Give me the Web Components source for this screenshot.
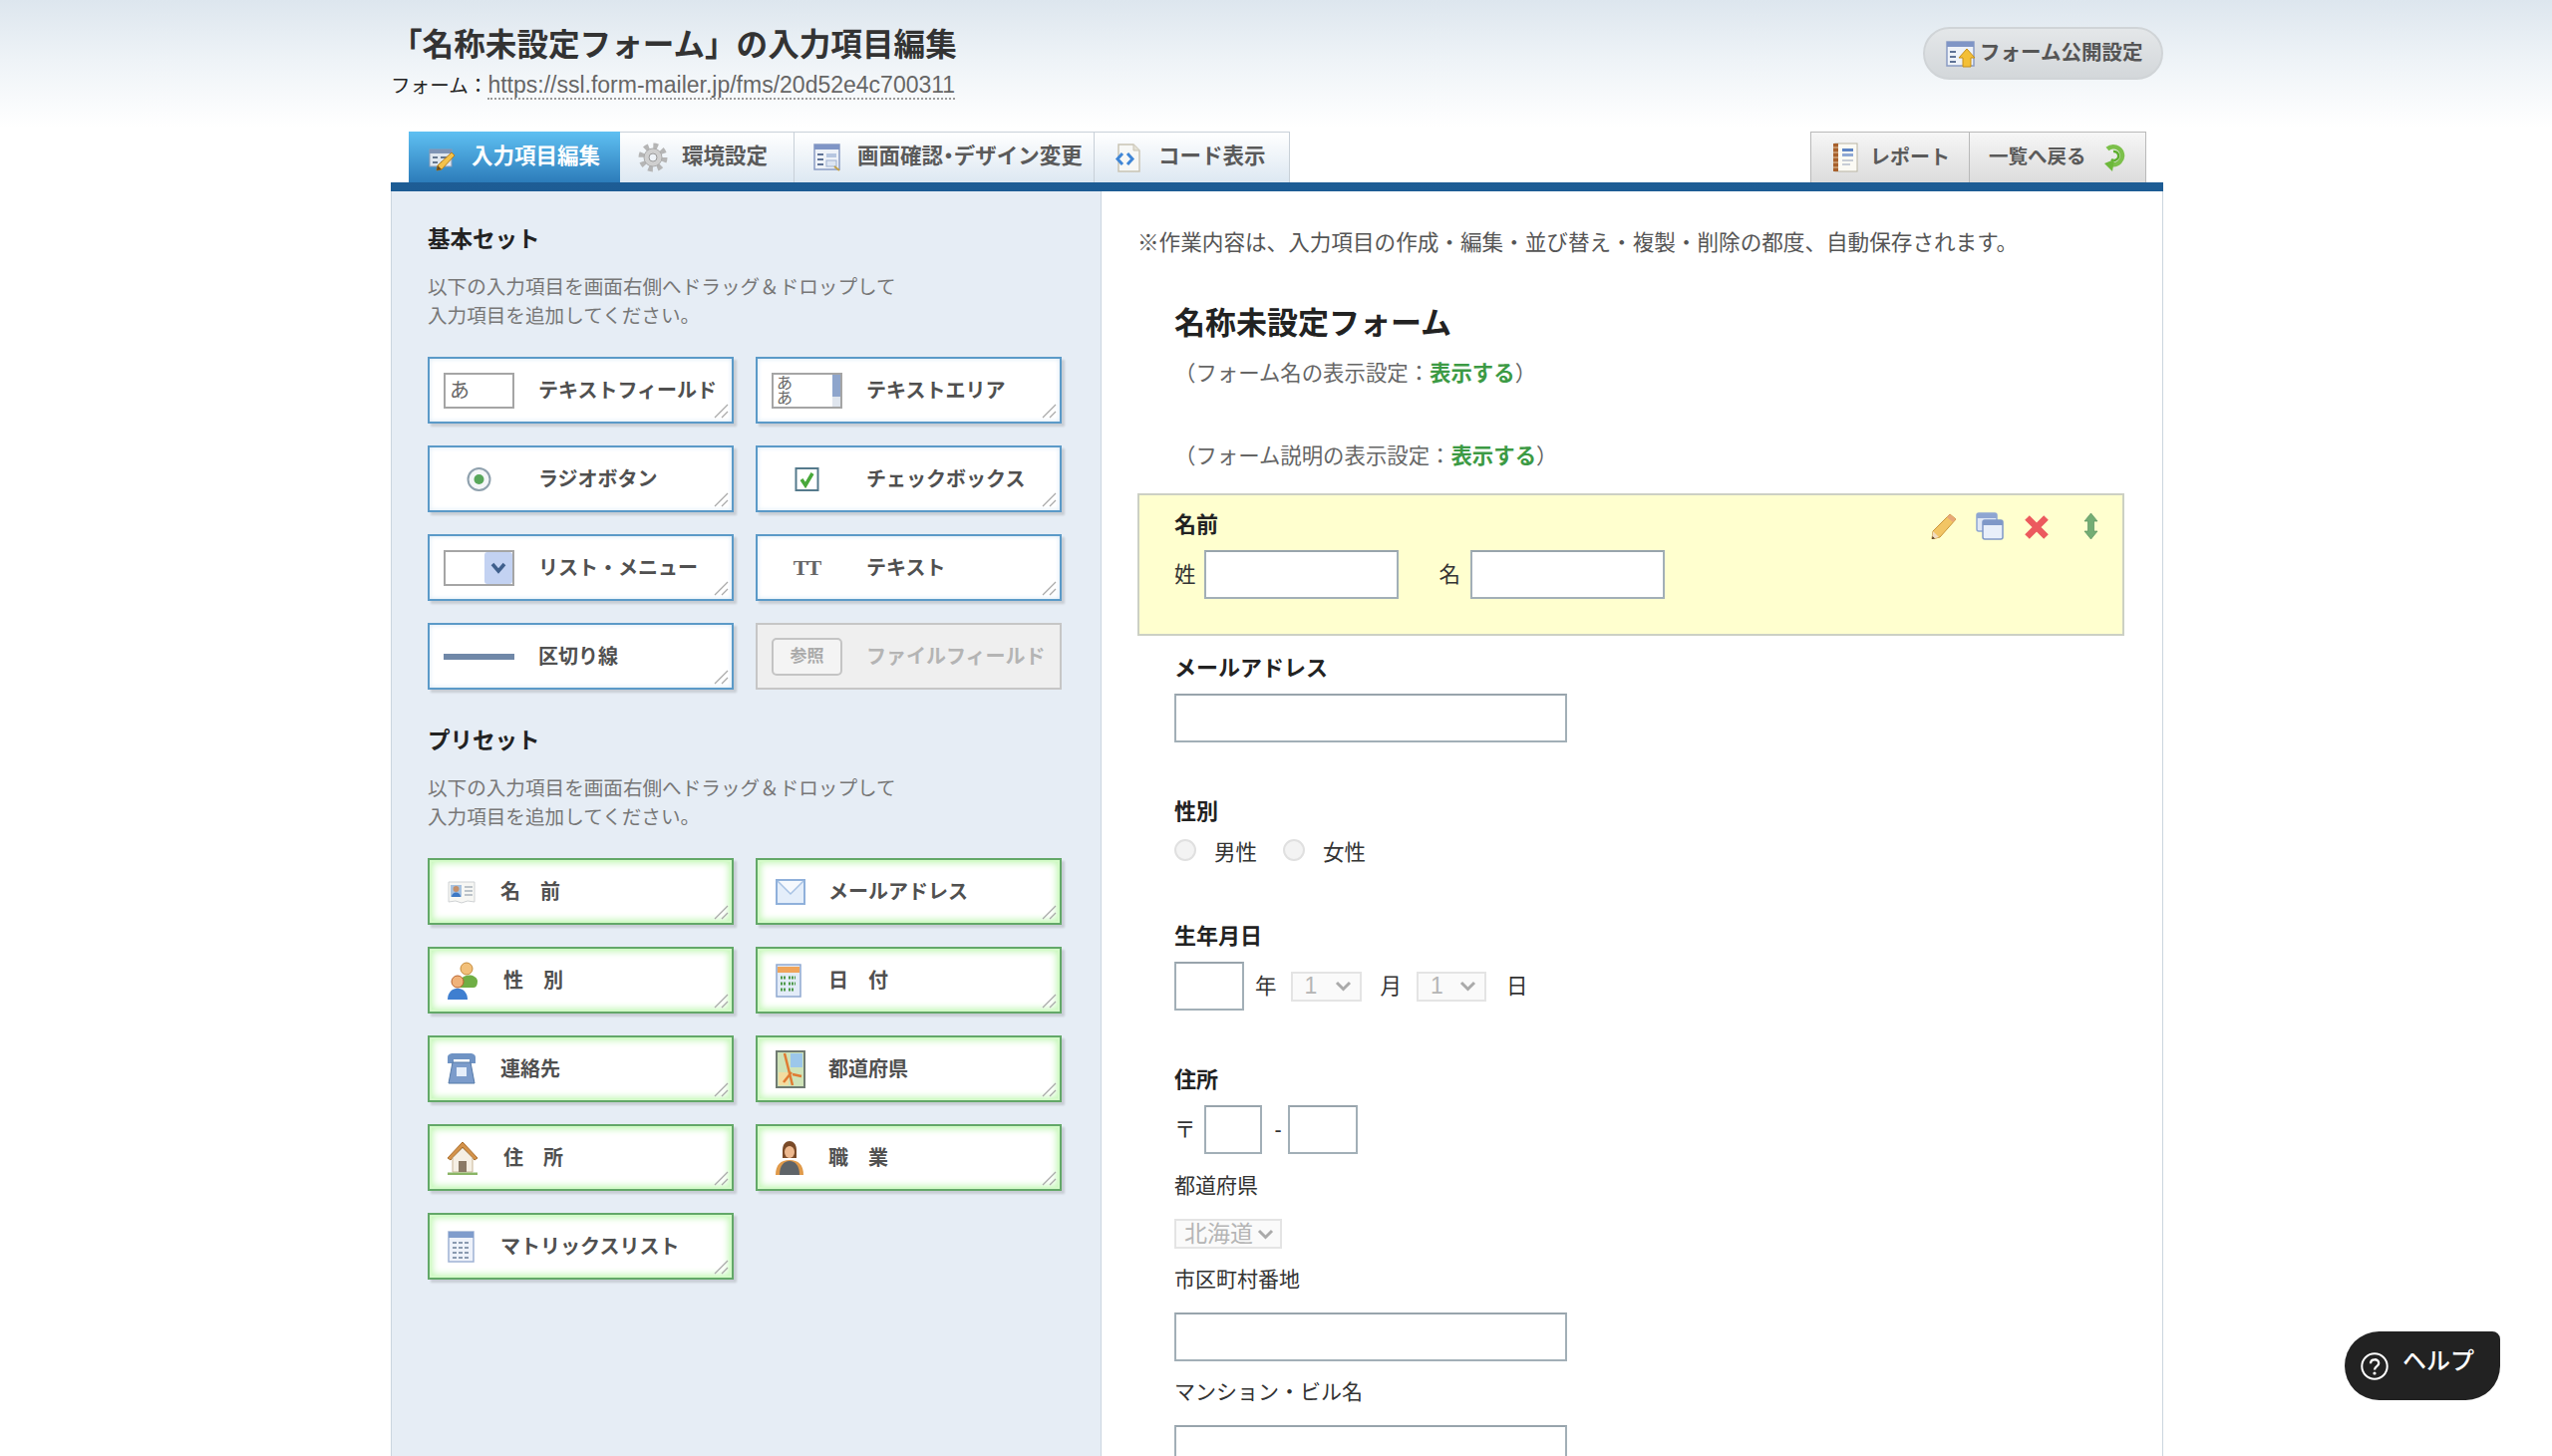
<!DOCTYPE html>
<html lang="ja">
<head>
<meta charset="utf-8">
<title>入力項目編集</title>
<style>
  html, body { margin: 0; height: 1461px; overflow: hidden; }
  body {
    background: linear-gradient(to bottom, #dde6ee 0, #eef3f7 60px, #fff 128px) no-repeat #fff;
    font-family: "Liberation Sans", "Noto Sans CJK JP", sans-serif;
    color: #222;
    display: flex;
    flex-direction: column;
  }
</style>
</head>
<body>

<fm-header>
  <span slot="title">「名称未設定フォーム」の入力項目編集</span>
  <a slot="link" href="#">https://ssl.form-mailer.jp/fms/20d52e4c700311</a>
  <fm-pill slot="action"><fm-icon slot="icon" name="publish"></fm-icon>フォーム公開設定</fm-pill>
</fm-header>

<fm-tabs>
  <fm-tab slot="left" active width="212" pad="20" gap="16"><fm-icon slot="icon" name="edit"></fm-icon>入力項目編集</fm-tab>
  <fm-tab slot="left" width="175" pad="18" gap="14"><fm-icon slot="icon" name="gear"></fm-icon>環境設定</fm-tab>
  <fm-tab slot="left" width="301" pad="19" gap="16"><fm-icon slot="icon" name="design"></fm-icon>画面確認<span style="font-feature-settings:'palt'">・</span>デザイン変更</fm-tab>
  <fm-tab slot="left" width="196" pad="20" gap="16"><fm-icon slot="icon" name="code"></fm-icon>コード表示</fm-tab>
  <fm-tab slot="right" grey width="160" pad="21" gap="12"><fm-icon slot="icon" name="report"></fm-icon>レポート</fm-tab>
  <fm-tab slot="right" grey width="177" pad="19" gap="15" flip><fm-icon slot="icon" name="back"></fm-icon>一覧へ戻る</fm-tab>
</fm-tabs>

<fm-workspace>
  <fm-palette slot="side" title="基本セット">
    <fm-chip tone="blue"><fm-icon slot="icon" name="textfield"></fm-icon>テキストフィールド</fm-chip>
    <fm-chip tone="blue"><fm-icon slot="icon" name="textarea"></fm-icon>テキストエリア</fm-chip>
    <fm-chip tone="blue"><fm-icon slot="icon" name="radio"></fm-icon>ラジオボタン</fm-chip>
    <fm-chip tone="blue"><fm-icon slot="icon" name="check"></fm-icon>チェックボックス</fm-chip>
    <fm-chip tone="blue"><fm-icon slot="icon" name="list"></fm-icon>リスト・メニュー</fm-chip>
    <fm-chip tone="blue"><fm-icon slot="icon" name="tt"></fm-icon>テキスト</fm-chip>
    <fm-chip tone="blue"><fm-icon slot="icon" name="rule"></fm-icon>区切り線</fm-chip>
    <fm-chip tone="off"><fm-icon slot="icon" name="file"></fm-icon>ファイルフィールド</fm-chip>
  </fm-palette>
  <fm-palette slot="side" title="プリセット" style="margin-top:37px">
    <fm-chip tone="green"><fm-icon slot="icon" name="card"></fm-icon>名　前</fm-chip>
    <fm-chip tone="green"><fm-icon slot="icon" name="mail"></fm-icon>メールアドレス</fm-chip>
    <fm-chip tone="green"><fm-icon slot="icon" name="gender"></fm-icon><span style="margin-left:3px">性　別</span></fm-chip>
    <fm-chip tone="green"><fm-icon slot="icon" name="calendar"></fm-icon>日　付</fm-chip>
    <fm-chip tone="green"><fm-icon slot="icon" name="phone"></fm-icon>連絡先</fm-chip>
    <fm-chip tone="green"><fm-icon slot="icon" name="map"></fm-icon>都道府県</fm-chip>
    <fm-chip tone="green"><fm-icon slot="icon" name="house"></fm-icon><span style="margin-left:3px">住　所</span></fm-chip>
    <fm-chip tone="green"><fm-icon slot="icon" name="worker"></fm-icon>職　業</fm-chip>
    <fm-chip tone="green"><fm-icon slot="icon" name="matrix"></fm-icon>マトリックスリスト</fm-chip>
  </fm-palette>

  <fm-form slot="main">
    <fm-toggle slot="title-toggle" what="フォーム名"></fm-toggle>
    <fm-toggle slot="desc-toggle" what="フォーム説明"></fm-toggle>

    <fm-selected>
      <fm-field label="名前" style="margin:15px 0 0 35px">
        <span>姓</span>
        <fm-input width="195" style="margin-left:8px"></fm-input>
        <span style="margin-left:41px">名</span>
        <fm-input width="195" style="margin-left:10px"></fm-input>
      </fm-field>
    </fm-selected>

    <fm-field label="メールアドレス" style="margin-top:18px">
      <fm-input width="394"></fm-input>
    </fm-field>

    <fm-field label="性別" style="margin-top:55px" tight>
      <fm-radio>男性</fm-radio>
      <fm-radio style="margin-left:26px">女性</fm-radio>
    </fm-field>

    <fm-field label="生年月日" style="margin-top:54px">
      <fm-input width="70"></fm-input>
      <span style="margin-left:11px">年</span>
      <fm-select width="71" style="margin-left:14px">1</fm-select>
      <span style="margin-left:19px">月</span>
      <fm-select width="70" style="margin-left:15px">1</fm-select>
      <span style="margin-left:20px">日</span>
    </fm-field>

    <fm-field label="住所" style="margin-top:55px">
      <span>〒</span>
      <fm-input width="58" style="margin-left:8px"></fm-input>
      <span style="margin-left:13px;width:13px">-</span>
      <fm-input width="70"></fm-input>
    </fm-field>
    <fm-field sub label="都道府県" style="margin-top:17px">
      <fm-select width="108" pad="8">北海道</fm-select>
    </fm-field>
    <fm-field sub label="市区町村番地" style="margin-top:16px">
      <fm-input width="394"></fm-input>
    </fm-field>
    <fm-field sub label="マンション・ビル名" style="margin-top:16px">
      <fm-input width="394"></fm-input>
    </fm-field>
  </fm-form>
</fm-workspace>

<fm-help>ヘルプ</fm-help>

<script>
const FONT = `"Liberation Sans", "Noto Sans CJK JP", sans-serif`;

// all the little pictures of the page, keyed by the name passed to <fm-icon>
const icons = {
  edit: `<svg width="27" height="28" viewBox="0 0 27 28">
    <rect x="1" y="6" width="22" height="17" fill="#dfe6ef" stroke="#8d9cb4"/>
    <rect x="1" y="6" width="22" height="4" fill="#7f93b5"/>
    <path d="M4 14h5M4 19h5M12 14h8M12 19h6" stroke="#66778f" stroke-width="2"/>
    <path d="M23 9l3 3-13 14-5 1 1-5z" fill="#f4c24a" stroke="#b57f1e"/>
    <path d="M8 27l1-5 4 4z" fill="#6b4a1c"/></svg>`,
  gear: `<svg width="30" height="30" viewBox="0 0 30 30">
    <circle cx="15" cy="15" r="11.5" fill="none" stroke="#b5b5b5" stroke-width="6" stroke-dasharray="4.5 4.53"/>
    <circle cx="15" cy="15" r="9" fill="#cfcfcf" stroke="#aaa"/>
    <circle cx="15" cy="15" r="4" fill="#eef3f8" stroke="#999"/></svg>`,
  design: `<svg width="28" height="30" viewBox="0 0 28 30">
    <rect x="1" y="2" width="25" height="25" fill="#eef2f8" stroke="#8a9cc4" stroke-width="1.5"/>
    <rect x="1" y="2" width="25" height="5" fill="#7f95c6"/>
    <path d="M4 12h6M4 17h6M4 22h6" stroke="#5f7396" stroke-width="2"/>
    <rect x="13" y="11" width="10" height="4" fill="#b6c6e0"/>
    <rect x="13" y="18" width="10" height="6" fill="#dce5f2" stroke="#9eb0cf"/>
    <path d="M21 24l5 4" stroke="#c2a14a" stroke-width="2"/></svg>`,
  code: `<svg width="28" height="30" viewBox="0 0 28 30">
    <path d="M4 2h15l6 6v21H4z" fill="#f7f8f6" stroke="#c9c4b4" stroke-width="1.5"/>
    <path d="M19 2v6h6" fill="#e4e1d6" stroke="#c9c4b4"/>
    <path d="M8 11l-5 5.5 5 5.5" fill="none" stroke="#3f86d6" stroke-width="3"/>
    <path d="M13 11l5 5.5-5 5.5" fill="none" stroke="#3f86d6" stroke-width="3"/></svg>`,
  report: `<svg width="26" height="30" viewBox="0 0 26 30">
    <rect x="3" y="1" width="22" height="28" fill="#fbfaf4" stroke="#b9b5a4"/>
    <rect x="1" y="1" width="5" height="28" fill="#a8602c"/>
    <path d="M1 5h5M1 10h5M1 15h5M1 20h5M1 25h5" stroke="#e3c9a4"/>
    <rect x="10" y="6" width="11" height="3" fill="#5d84c4"/>
    <rect x="10" y="11" width="11" height="3" fill="#8ea8d4"/>
    <path d="M10 18h11M10 22h8" stroke="#c7cdd6" stroke-width="2"/></svg>`,
  back: `<svg width="24" height="30" viewBox="0 0 24 30">
    <path d="M6 6.5a9 9 0 1 1 4 15.5" fill="none" stroke="#7cc04a" stroke-width="4.5"/>
    <path d="M12 9a4.5 4.5 0 1 1-2 8" fill="none" stroke="#5cae2d" stroke-width="2.5"/>
    <path d="M13 17l-2 12-8-8z" fill="#6cb83a"/></svg>`,
  publish: `<svg width="30" height="28" viewBox="0 0 30 28">
    <rect x="1" y="2" width="27" height="24" fill="#eef2f8" stroke="#8a9cc4" stroke-width="1.5"/>
    <rect x="1" y="2" width="27" height="5" fill="#7f95c6"/>
    <path d="M4 12h6M4 17h6M4 22h6" stroke="#5f7396" stroke-width="2"/>
    <path d="M21 9l8 9h-4v9h-8v-9h-4z" fill="#f3bf36" stroke="#c48f1c"/></svg>`,

  textfield: `<div class="box">あ</div>`,
  textarea: `<div class="box area"><span>あ<br>あ</span><i></i></div>`,
  radio: `<svg width="71" height="36" viewBox="0 0 71 36">
    <circle cx="35.5" cy="18" r="11" fill="#f4f6f8" stroke="#8ea0ad" stroke-width="2"/>
    <circle cx="35.5" cy="18" r="5" fill="#58a65a"/></svg>`,
  check: `<svg width="71" height="36" viewBox="0 0 71 36">
    <rect x="24.5" y="7" width="22" height="22" fill="#fff" stroke="#557a8c" stroke-width="2"/>
    <path d="M30 18l4 6 7-12" fill="none" stroke="#48a83a" stroke-width="3.5"/></svg>`,
  list: `<svg width="71" height="36" viewBox="0 0 71 36">
    <rect x="1" y="1" width="69" height="34" fill="#fff" stroke="#a5a5a5" stroke-width="2"/>
    <rect x="41" y="2" width="28" height="32" rx="3" fill="#c3d2f2"/>
    <path d="M49 14l6 7 6-7" fill="none" stroke="#3f5f8c" stroke-width="3.5"/></svg>`,
  tt: `<div class="tt">TT</div>`,
  rule: `<svg width="71" height="36" viewBox="0 0 71 36"><rect y="15" width="71" height="6" fill="#7088a8"/></svg>`,
  file: `<div class="ref">参照</div>`,

  card: `<svg width="28" height="24" viewBox="0 0 28 24">
    <path d="M1 2h26v20l-7-1-6 2-6-2-7 1z" fill="#f7f7f4" stroke="#cfd2d4"/>
    <rect x="3" y="5" width="11" height="12" fill="#a7c2e0"/>
    <circle cx="8.5" cy="9" r="3" fill="#c48f6a"/><path d="M4 17c0-6 9-6 9 0z" fill="#3d78c4"/>
    <path d="M17 7h8M17 11h8M17 15h8" stroke="#a9b2ba" stroke-width="1.5"/></svg>`,
  mail: `<svg width="30" height="26" viewBox="0 0 30 26">
    <rect x="1" y="1" width="28" height="24" fill="#e4eefa" stroke="#8fb0da" stroke-width="2"/>
    <path d="M2 2l13 13L28 2" fill="#f6f9fd" stroke="#a7c2e4" stroke-width="1.5"/></svg>`,
  gender: `<svg width="30" height="38" viewBox="0 0 30 38">
    <circle cx="19" cy="7" r="6" fill="#f2c07a" stroke="#c58a3a"/><path d="M11 25c0-14 17-14 19-6 0 4-1 7-4 7H13z" fill="#6fae45"/>
    <circle cx="10" cy="20" r="6" fill="#f0b27a" stroke="#b9622c"/><path d="M0 38c0-15 20-15 20 0z" fill="#3f7fd0"/></svg>`,
  calendar: `<svg width="26" height="34" viewBox="0 0 26 34">
    <rect x="1" y="1" width="24" height="32" fill="#e3ecf8" stroke="#8fa8d0" stroke-width="1.5"/>
    <rect x="2" y="3" width="22" height="6" fill="#f0a45a"/>
    <path d="M5 14h5M13 14h7M5 20h5M13 20h7M5 26h5M13 26h5" stroke="#4f9a4a" stroke-width="3" stroke-dasharray="2 1"/></svg>`,
  phone: `<svg width="28" height="32" viewBox="0 0 28 32">
    <path d="M0 4c0-3 3-4 5-4h18c2 0 5 1 5 4v6h-6V6H6v4H0z" fill="#6f93c4"/>
    <path d="M5 9h18l4 21H1z" fill="#7c9ccb" stroke="#557aa8"/>
    <rect x="9" y="14" width="10" height="9" fill="#e5eefa"/></svg>`,
  map: `<svg width="30" height="38" viewBox="0 0 30 38">
    <rect x="1" y="1" width="28" height="36" fill="#cfe3b8" stroke="#707b72" stroke-width="2"/>
    <rect x="15" y="3" width="12" height="14" fill="#9cc7ea"/>
    <rect x="3" y="22" width="10" height="13" fill="#f3dca0"/>
    <path d="M9 3l8 32M16 22l-8 10M17 24l9 2" stroke="#e07b33" stroke-width="2.5"/></svg>`,
  house: `<svg width="30" height="34" viewBox="0 0 30 34">
    <path d="M15 1L0 17l3 2L15 6l12 13 3-2z" fill="#d3924a" stroke="#a96c2a"/>
    <path d="M5 17L15 7l10 10v14H5z" fill="#f5efe4" stroke="#c9b596"/>
    <rect x="11" y="20" width="8" height="11" fill="#8b7a66"/>
    <path d="M0 33h30" stroke="#8ab565" stroke-width="3"/></svg>`,
  worker: `<svg width="28" height="34" viewBox="0 0 28 34">
    <path d="M7 9c0-12 14-12 14 0v8H7z" fill="#7a4a28"/>
    <ellipse cx="14" cy="11" rx="5" ry="6" fill="#eeb98f"/>
    <path d="M0 34c0-10 5-15 14-15s14 5 14 15z" fill="#e09a4a"/>
    <path d="M4 34c0-9 4-14 10-14s10 5 10 14z" fill="#5f6468"/></svg>`,
  matrix: `<svg width="27" height="32" viewBox="0 0 27 32">
    <rect x="1" y="1" width="25" height="30" fill="#eef2fa" stroke="#9fb2d4" stroke-width="1.5"/>
    <rect x="1" y="1" width="25" height="6" fill="#7f9ccc"/>
    <path d="M5 12h17M5 17h17M5 22h17M5 27h17" stroke="#8a9ab0" stroke-width="2" stroke-dasharray="4 2"/></svg>`,

  pencil: `<svg width="26" height="26" viewBox="0 0 26 26">
    <path d="M19 1l6 5L9 24l-8 2 1-8z" fill="#f2c564" stroke="#c9953a"/>
    <path d="M19 1l6 5-3 3-6-5z" fill="#e8a878"/>
    <path d="M1 26l1-8 6 6z" fill="#f0dcc0"/><path d="M1 26l.5-3 2.5 2.5z" fill="#553a1c"/></svg>`,
  copy: `<svg width="28" height="28" viewBox="0 0 28 28">
    <rect x="1" y="1" width="20" height="18" rx="2" fill="#dfe7f5" stroke="#8fa6d2" stroke-width="1.5"/>
    <rect x="1" y="1" width="20" height="5" fill="#8fa6d2"/>
    <rect x="7" y="8" width="20" height="19" rx="2" fill="#e8effa" stroke="#7f98c8" stroke-width="1.5"/>
    <rect x="7" y="8" width="20" height="5" fill="#7f98c8"/></svg>`,
  remove: `<svg width="24" height="24" viewBox="0 0 24 24">
    <path d="M2.5 2.5l19 19M21.5 2.5l-19 19" stroke="#ec5a5e" stroke-width="6.5"/></svg>`,
  move: `<svg width="15" height="26" viewBox="0 0 15 26">
    <path d="M7.5 0L14 8h-3.5v10H14l-6.5 8L1 18h3.5V8H1z" fill="#74ad74" stroke="#5a9460" stroke-width=".7"/></svg>`,
  help: `<svg width="28" height="28" viewBox="0 0 28 28">
    <circle cx="14" cy="14" r="12.7" fill="none" stroke="#fff" stroke-width="2"/>
    <path d="M10 11.2c0-5.2 8.2-5.2 8.2-.2 0 3.2-4.2 3-4.2 6.4" fill="none" stroke="#fff" stroke-width="2.3"/>
    <circle cx="14" cy="21" r="1.6" fill="#fff"/></svg>`
};

function make_template (html) {
  const template = document.createElement('template');
  template.innerHTML = html;
  return template;
}

// every element here is the same pattern: clone a template into an open shadow
class FmElement extends HTMLElement {
  connectedCallback () {
    if (this.shadowRoot) return;
    this.attachShadow({mode: "open"});
    this.shadowRoot.appendChild(this.constructor.template.content.cloneNode(true));
    this.ready();
  }
  ready () {}
}

class FmIcon extends FmElement {
  static template = make_template(`
    <style>
      :host { display: block; line-height: 0; }
      svg { display: block; }
      .box {
        box-sizing: border-box; width: 71px; height: 36px;
        border: 2px solid #a5a5a5; background: #fff; display: flex;
        padding-left: 4px; align-items: center;
        font: 400 20px/1 ${FONT}; color: #666;
      }
      .area { font-size: 16px; line-height: 15px; justify-content: space-between; padding: 0; }
      .area span { padding-left: 3px; }
      .area i {
        width: 8px; height: 100%;
        background: linear-gradient(to bottom, #8ea5cc 0 68%, #dfe5ee 68%);
      }
      .tt { width: 71px; height: 36px; text-align: center; font: 700 22px/36px "Liberation Serif", serif; color: #666; letter-spacing: -1px; }
      .ref {
        box-sizing: border-box; width: 71px; height: 38px; border: 2px solid #c4c4c4; border-radius: 5px;
        background: #f4f4f4; text-align: center; font: 700 17px/34px ${FONT}; color: #aaa;
      }
    </style>
    <span id="art"></span>
  `);
  ready () {
    this.shadowRoot.getElementById("art").innerHTML = icons[this.getAttribute("name")];
  }
}

class FmHeader extends FmElement {
  static template = make_template(`
    <style>
      :host {
        display: flex; justify-content: space-between; flex: none;
        box-sizing: border-box; width: 1778px; height: 132px; margin-left: 392px;
      }
      h1 { margin: 23px 0 0; font: 700 31.6px/44px ${FONT}; color: #333; }
      p { margin: 3px 0 0; font: 400 19.6px/30px ${FONT}; color: #222; }
      ::slotted(a) {
        font-size: 23px; color: #666; text-decoration: none;
        border-bottom: 2px dotted #999;
      }
    </style>
    <div>
      <h1><slot name="title"></slot></h1>
      <p>フォーム：<slot name="link"></slot></p>
    </div>
    <slot name="action"></slot>
  `);
}

class FmPill extends FmElement {
  static template = make_template(`
    <style>
      :host {
        display: flex; align-items: center; gap: 4px;
        box-sizing: border-box; width: 241px; height: 53px; margin-top: 27px; padding-left: 21px;
        border: 2px solid #d0d4d7; border-radius: 27px;
        background: linear-gradient(to bottom, #e4e7e9, #d3d7da);
        font: 700 20.5px/1 ${FONT}; color: #555; white-space: nowrap;
      }
    </style>
    <slot name="icon"></slot><slot></slot>
  `);
}

class FmTabs extends FmElement {
  static template = make_template(`
    <style>
      :host {
        display: flex; justify-content: space-between; flex: none;
        box-sizing: border-box; width: 1778px; height: 60px; margin-left: 392px;
        padding: 0 17px 0 18px;
        border-bottom: 9px solid #2a6fa8;
        border-image: linear-gradient(to bottom, #3a86bf, #1d5c94) 1;
      }
      div { display: flex; }
    </style>
    <div><slot name="left"></slot></div>
    <div><slot name="right"></slot></div>
  `);
}

class FmTab extends FmElement {
  static template = make_template(`
    <style>
      :host {
        display: flex; align-items: center; box-sizing: border-box; height: 51px;
        border: 1px solid #c8d0d8; border-bottom: 0; border-left-width: 0;
        background: linear-gradient(to bottom, #fff, #dde8f2);
        font: 700 21.5px/1 ${FONT}; color: #5a5a5a; white-space: nowrap;
      }
      :host([active]) {
        border: 0; color: #fff;
        background: linear-gradient(to bottom, #5fc0f2, #2c7cba);
      }
      :host([grey]) {
        border: 1px solid #b9b9b9; border-bottom: 0; border-left-width: 0;
        background: linear-gradient(to bottom, #f6f6f6, #dcdcdc);
        font-size: 20px;
      }
      :host([slot=right]:not([flip])) { border-left-width: 1px; }
      :host([flip]) { flex-direction: row-reverse; justify-content: flex-end; font-size: 19.5px; }
    </style>
    <slot name="icon"></slot><span><slot></slot></span>
  `);
  ready () {
    this.style.width = this.getAttribute("width") + "px";
    this.style.paddingLeft = this.getAttribute("pad") + "px";
    this.style.gap = this.getAttribute("gap") + "px";
  }
}

class FmWorkspace extends FmElement {
  static template = make_template(`
    <style>
      :host {
        display: grid; grid-template-columns: 712px 1fr;
        box-sizing: border-box; width: 1778px; margin-left: 392px; flex: 1;
        border-left: 1px solid #cbd5df; border-right: 1px solid #cbd5df;
      }
      #side { background: #e6edf5; border-right: 1px solid #cbd5df; padding: 34px 0 0 36px; }
      #main { padding: 37px 38px 0 36px; }
    </style>
    <div id="side"><slot name="side"></slot></div>
    <div id="main"><slot name="main"></slot></div>
  `);
}

class FmPalette extends FmElement {
  static template = make_template(`
    <style>
      :host { display: block; }
      h2 { margin: 0; font: 700 22.5px/30px ${FONT}; color: #222; }
      p { margin: 18px 0 26px; font: 400 19.6px/29px ${FONT}; color: #777; }
      #grid { display: grid; grid-template-columns: 307px 307px; grid-auto-rows: 67px; gap: 22px; }
    </style>
    <h2></h2>
    <p>以下の入力項目を画面右側へドラッグ＆ドロップして<br>入力項目を追加してください。</p>
    <div id="grid"><slot></slot></div>
  `);
  ready () {
    this.shadowRoot.querySelector("h2").textContent = this.getAttribute("title");
    this.removeAttribute("title");
  }
}

class FmChip extends FmElement {
  static template = make_template(`
    <style>
      :host {
        display: flex; align-items: center; position: relative; box-sizing: border-box;
        background: #fff; border: 2px solid #5b9ac8; padding: 1px 0 0 14px; gap: 24px;
        box-shadow: 3px 3px 2px #0002, inset 0 0 5px #d5e6f4;
        font: 700 20px/1 ${FONT}; color: #505050; white-space: nowrap;
      }
      :host([tone=green]) {
        border-color: #63a868; padding-left: 18px; gap: 0;
        box-shadow: 3px 3px 2px #0002, inset 0 0 0 2px #d4fbc9, inset 0 0 7px 3px #c2f7b5;
      }
      :host([tone=off]) {
        background: #efefef; border-color: #c6c6c6; color: #b4b4b4; box-shadow: none;
      }
      :host([tone=green]) #icon { width: 34px; margin-right: 19px; }
      svg { position: absolute; right: 3px; bottom: 3px; }
      :host([tone=off]) svg { display: none; }
    </style>
    <div id="icon"><slot name="icon"></slot></div>
    <slot></slot>
    <svg width="15" height="15" viewBox="0 0 15 15"><path d="M1 14L14 1M8 14l6-6" stroke="#aaa" stroke-width="1.3"/></svg>
  `);
}

class FmForm extends FmElement {
  static template = make_template(`
    <style>
      :host { display: block; }
      p { margin: 0 0 44px; font: 400 21.6px/30px ${FONT}; color: #555; white-space: nowrap; }
      h1 { margin: 0 0 0 37px; font: 700 31px/44px ${FONT}; color: #222; }
      #a { margin: 13px 0 0 37px; }
      #b { margin: 53px 0 22px 37px; }
    </style>
    <p>※作業内容は、入力項目の作成・編集・並び替え・複製・削除の都度、自動保存されます。</p>
    <h1>名称未設定フォーム</h1>
    <div id="a"><slot name="title-toggle"></slot></div>
    <div id="b"><slot name="desc-toggle"></slot></div>
    <slot></slot>
  `);
}

class FmToggle extends FmElement {
  static template = make_template(`
    <style>
      :host { display: block; font: 400 21.4px/30px ${FONT}; color: #666; }
      b { color: #3c9a44; }
    </style>
    （<span></span>の表示設定：<b>表示する</b>）
  `);
  ready () {
    this.shadowRoot.querySelector("span").textContent = this.getAttribute("what");
  }
}

class FmSelected extends FmElement {
  static template = make_template(`
    <style>
      :host {
        display: flex; justify-content: space-between; box-sizing: border-box; height: 143px;
        background: #ffffcf; border: 2px solid #ccd0c4;
      }
      #actions { display: flex; gap: 19px; padding: 18px 24px 0 0; height: 28px; }
      fm-icon:nth-child(2) { margin-top: -1px; }
      fm-icon:nth-child(3) { margin-left: 2px; margin-top: 2px; }
      fm-icon:nth-child(4) { margin-left: 16px; }
    </style>
    <slot></slot>
    <div id="actions">
      <fm-icon name="pencil"></fm-icon>
      <fm-icon name="copy"></fm-icon>
      <fm-icon name="remove"></fm-icon>
      <fm-icon name="move"></fm-icon>
    </div>
  `);
}

class FmField extends FmElement {
  static template = make_template(`
    <style>
      :host { display: block; margin-left: 37px; }
      h3 { margin: 0; font: 700 22px/30px ${FONT}; color: #222; }
      #row { display: flex; align-items: center; margin-top: 10px; font: 400 21.5px/30px ${FONT}; color: #333; }
      :host([tight]) #row { margin-top: 8px; }
      :host([sub]) h3 { font-weight: 400; font-size: 21px; color: #333; }
      :host([sub]) #row { margin-top: 18px; }
    </style>
    <h3></h3>
    <div id="row"><slot></slot></div>
  `);
  ready () {
    this.shadowRoot.querySelector("h3").textContent = this.getAttribute("label");
  }
}

class FmInput extends FmElement {
  static template = make_template(`
    <style>
      :host { display: block; }
      input {
        display: block; box-sizing: border-box; height: 49px; margin: 0; padding: 0 6px;
        background: #fff; border: 2px solid #a2afb7; border-top-color: #98a4ac; border-radius: 0; outline: 0;
      }
    </style>
    <input type="text">
  `);
  ready () {
    this.shadowRoot.querySelector("input").style.width = this.getAttribute("width") + "px";
  }
}

class FmRadio extends FmElement {
  static template = make_template(`
    <style>
      :host { display: flex; align-items: center; font: 400 21.5px/30px ${FONT}; color: #333; }
      input {
        appearance: none; box-sizing: border-box; width: 22px; height: 22px; margin: -3px 18px 0 0;
        border: 2px solid #e0e0e0; border-radius: 50%; background: #f3f3f3;
      }
      span { margin-top: 3px; }
    </style>
    <input type="radio" disabled><span><slot></slot></span>
  `);
}

class FmSelect extends FmElement {
  static template = make_template(`
    <style>
      :host {
        display: flex; align-items: center; justify-content: space-between; box-sizing: border-box;
        height: 30px; padding: 0 8px 0 12px;
        border: 2px solid #e4e4e4; background: #fafafa;
        font: 400 23px/1 ${FONT}; color: #b5b5b5;
      }
      svg { flex: none; }
    </style>
    <slot></slot>
    <svg width="17" height="11" viewBox="0 0 17 11"><path d="M2 2l6.5 6.5L15 2" fill="none" stroke="#aaa" stroke-width="3"/></svg>
  `);
  ready () {
    this.style.width = this.getAttribute("width") + "px";
    const pad = this.getAttribute("pad");
    if (pad) { this.style.paddingLeft = pad + "px"; this.style.paddingRight = "6px"; }
  }
}

class FmHelp extends FmElement {
  static template = make_template(`
    <style>
      :host {
        position: fixed; left: 2352px; top: 1336px; width: 156px; height: 69px;
        display: flex; align-items: center; gap: 14px; box-sizing: border-box; padding-left: 16px;
        background: #222; border-radius: 35px 8px 35px 35px;
        font: 500 24px/1 ${FONT}; color: #fff;
      }
      span { margin-top: -9px; }
    </style>
    <fm-icon name="help"></fm-icon><span><slot></slot></span>
  `);
}

customElements.define("fm-icon", FmIcon);
customElements.define("fm-header", FmHeader);
customElements.define("fm-pill", FmPill);
customElements.define("fm-tabs", FmTabs);
customElements.define("fm-tab", FmTab);
customElements.define("fm-workspace", FmWorkspace);
customElements.define("fm-palette", FmPalette);
customElements.define("fm-chip", FmChip);
customElements.define("fm-form", FmForm);
customElements.define("fm-toggle", FmToggle);
customElements.define("fm-selected", FmSelected);
customElements.define("fm-field", FmField);
customElements.define("fm-input", FmInput);
customElements.define("fm-radio", FmRadio);
customElements.define("fm-select", FmSelect);
customElements.define("fm-help", FmHelp);
</script>
</body>
</html>
